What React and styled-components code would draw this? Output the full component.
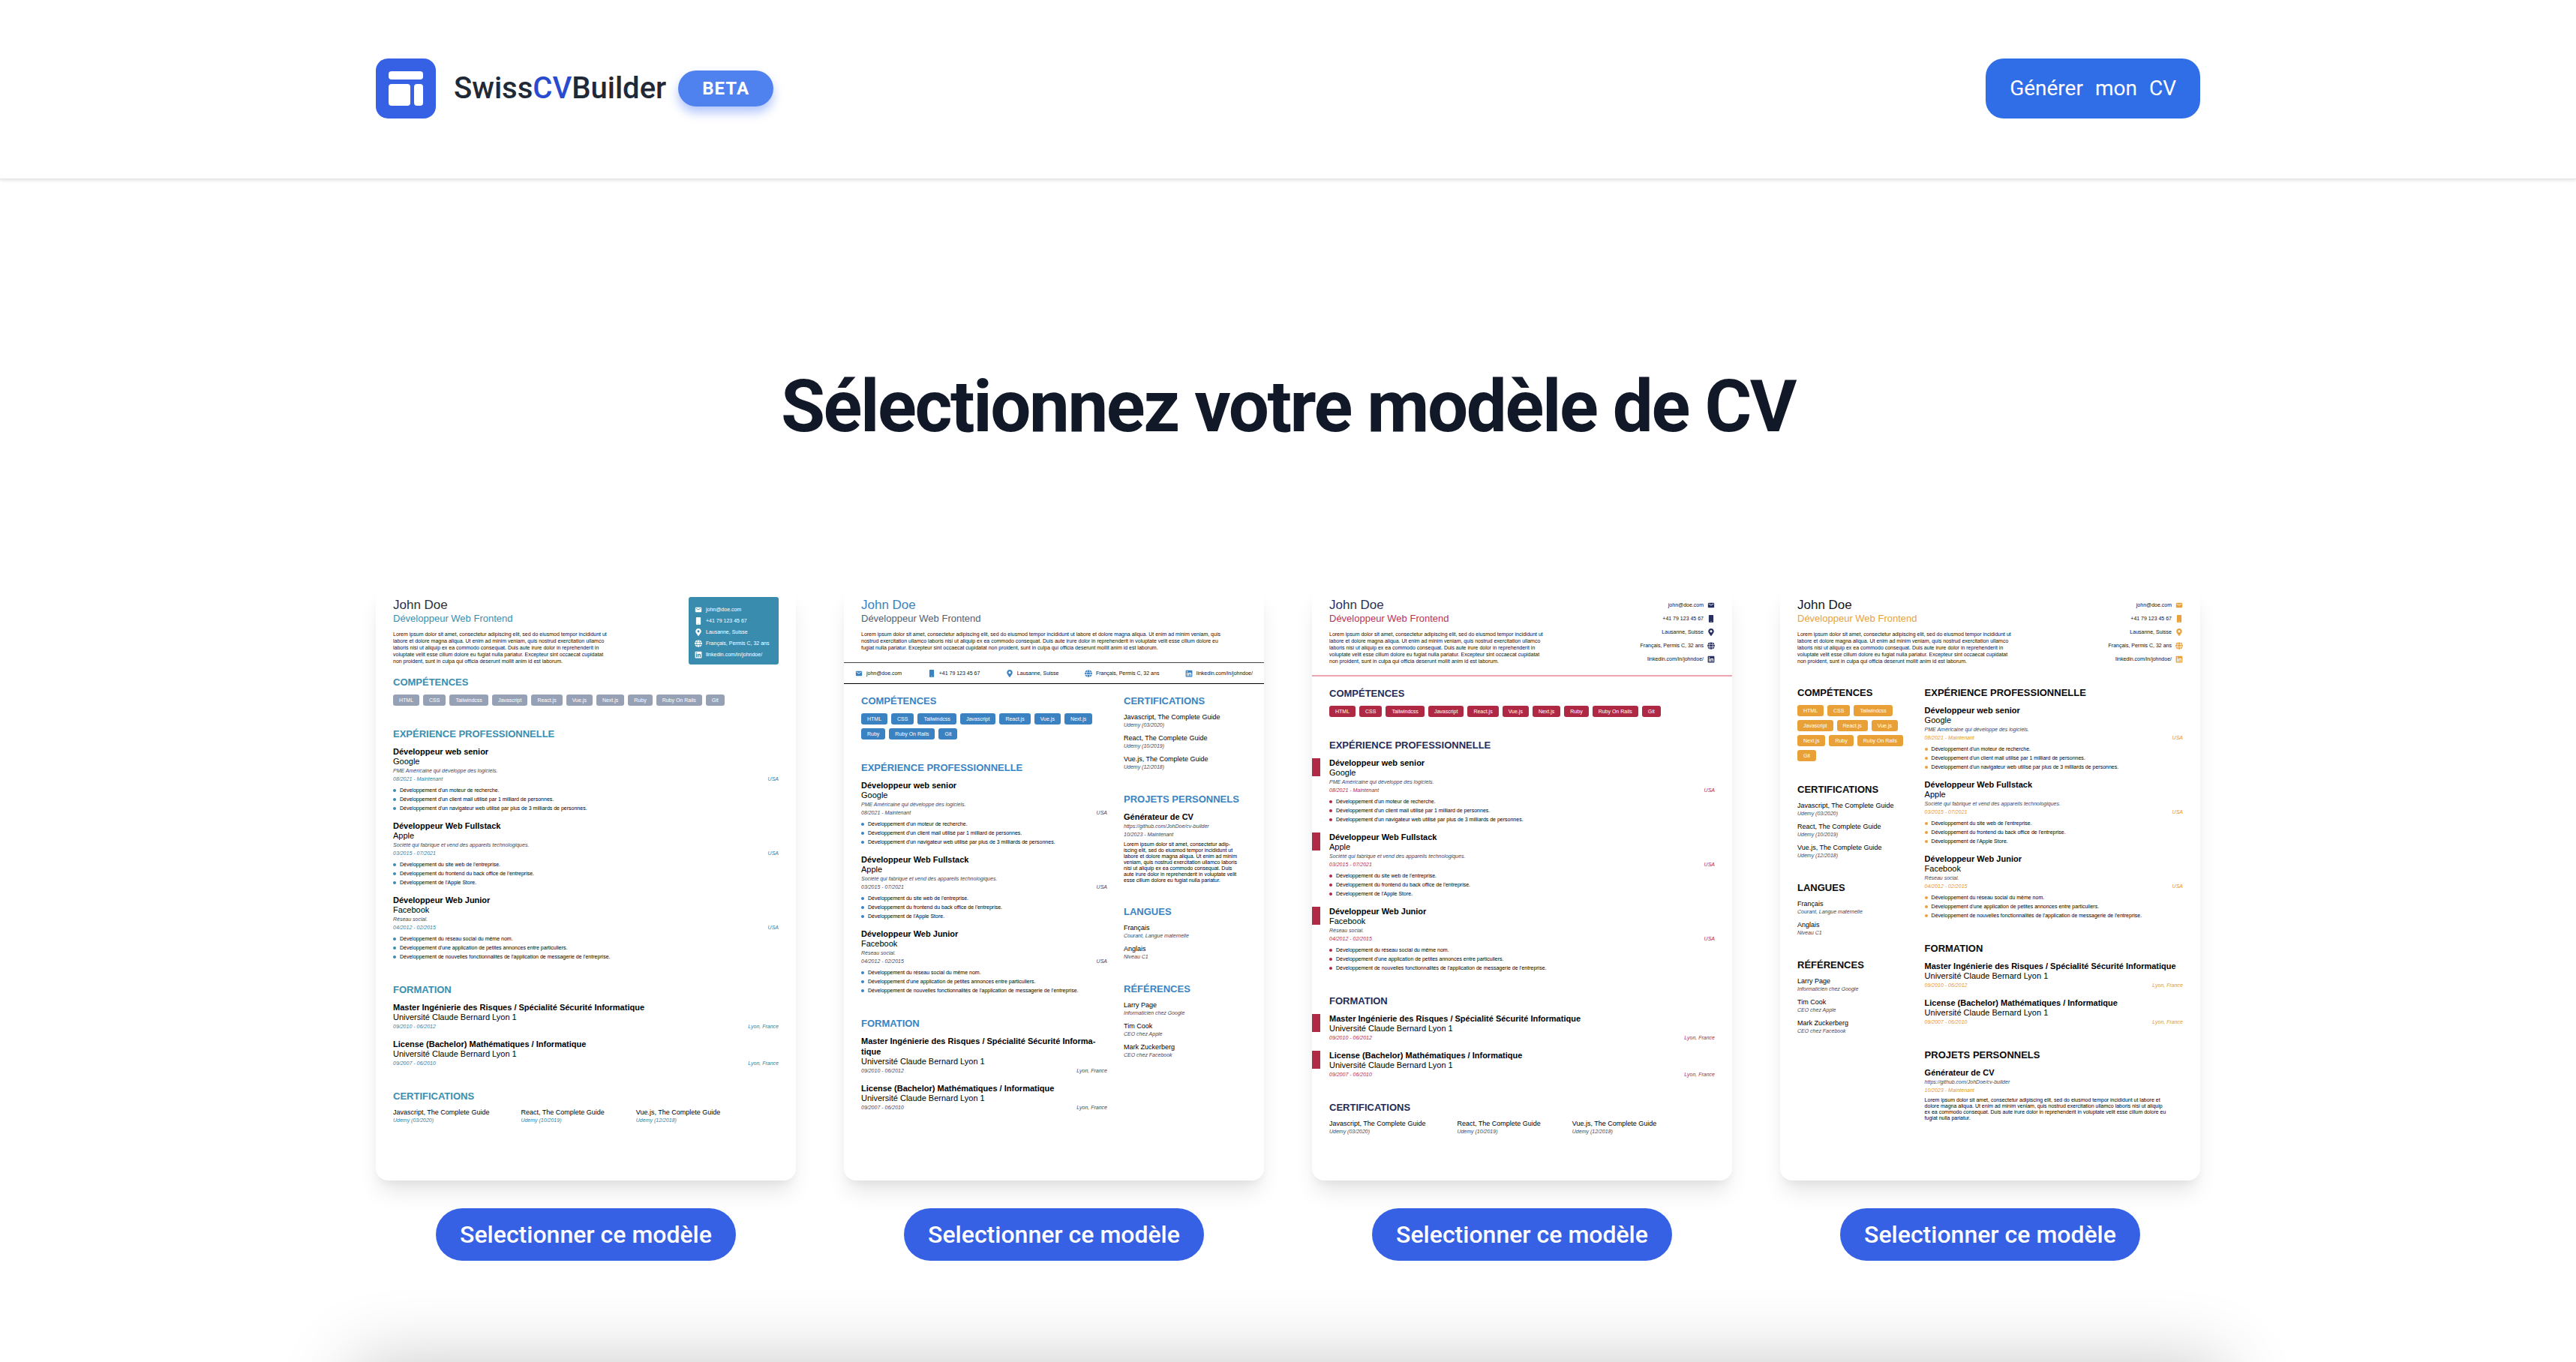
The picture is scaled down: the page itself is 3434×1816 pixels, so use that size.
import React from "react";
import styled, { createGlobalStyle, ThemeProvider } from "styled-components";
import { FaMobile, FaMapMarkerAlt, FaGlobe, FaLinkedin } from "react-icons/fa";
import { MdEmail } from "react-icons/md";

const GlobalStyle = createGlobalStyle`
  *, *::before, *::after { box-sizing: border-box; }
  body { margin: 0; background: #fff; font-family: Roboto, "Liberation Sans", sans-serif; }
  h1, h2, h3, h4, p, ul { margin: 0; padding: 0; }
  ul { list-style: none; }
`;

/* ---------- Page ---------- */

const Page = styled.div`
  min-height: 100vh;
  overflow: hidden;
`;

const Header = styled.header`
  border-bottom: 1px solid #e2e4e6;
  box-shadow: 0 2px 4px rgba(0, 0, 0, 0.1);
  padding: 78px 64px 80px;
`;

const HeaderInner = styled.div`
  max-width: 2432px;
  margin: 0 auto;
  display: flex;
  align-items: center;
  justify-content: space-between;
`;

const Brand = styled.a`
  display: flex;
  align-items: center;
  color: #1f2937;
  text-decoration: none;
`;

const Logo = styled.svg`
  width: 80px;
  height: 80px;
`;

const BrandName = styled.span`
  margin: 0 16px 0 24px;
  font-size: 40px;
  font-weight: 500;
  line-height: 56px;
`;

const Accent = styled.span`
  color: #294bd0;
`;

const Beta = styled.span`
  padding: 0 32px;
  border-radius: 24px;
  background: #4f82ee;
  box-shadow: 0 8px 14px rgba(59, 110, 246, 0.4);
  color: #fff;
  font-size: 24px;
  font-weight: 700;
  line-height: 48px;
  letter-spacing: 1px;
`;

const PrimaryButton = styled.button`
  display: flex;
  gap: 16px;
  padding: 0 32px;
  border: 0;
  border-radius: 24px;
  background: #306ee8;
  color: #fff;
  font: 400 28px/80px Roboto, sans-serif;
`;

const Main = styled.main`
  max-width: 2560px;
  margin: 0 auto;
  padding: 255px 64px 0;
`;

const Title = styled.h1`
  color: #111827;
  font-size: 96px;
  font-weight: 700;
  line-height: 96px;
  letter-spacing: -0.025em;
  text-align: center;
`;

const Templates = styled.div`
  display: grid;
  grid-template-columns: repeat(4, minmax(0, 1fr));
  gap: 64px;
  margin-top: 192px;
`;

const Template = styled.article`
  display: flex;
  flex-direction: column;
  align-items: center;
  gap: 37px;
`;

const SelectButton = styled.button`
  padding: 0 32px;
  border: 0;
  border-radius: 35px;
  background: #3761e4;
  color: #fff;
  font: 500 32px/70px Roboto, sans-serif;
`;

const NextPanel = styled.section`
  height: 200px;
  margin: 139px -28px -200px;
  box-shadow: 0 0 100px rgba(0, 0, 0, 0.23);
`;

/* ---------- CV sheet ---------- */

const Sheet = styled.div`
  width: 100%;
  aspect-ratio: 210 / 297;
  overflow: hidden;
  padding-top: 14px;
  border-radius: 16px;
  background: #fff;
  box-shadow: 0 20px 30px -6px rgba(0, 0, 0, 0.1), 0 8px 12px -4px rgba(0, 0, 0, 0.05);
  color: #000;
  font-family: "Liberation Sans", Arial, sans-serif;
  font-size: 7px;
`;

const SheetHead = styled.div`
  display: flex;
  justify-content: space-between;
  padding: 0 23px;
`;

const Name = styled.h2`
  color: ${(p) => p.theme.name};
  font-size: 17px;
  font-weight: 400;
  line-height: 22px;
`;

const Role = styled.p`
  color: ${(p) => p.theme.role};
  font-size: 13px;
  line-height: 14px;
`;

const Summary = styled.p`
  max-width: ${(p) => p.$width}px;
  margin-top: 9px;
  color: #111;
  line-height: 9px;
`;

const ContactList = styled.ul`
  color: ${(p) => p.theme.contactText};
`;

const ContactBox = styled(ContactList)`
  align-self: flex-start;
  width: 120px;
  height: 90px;
  padding: 9px 0 0 8px;
  border-radius: 3px;
  background: ${(p) => p.theme.accent};
`;

const ContactBar = styled(ContactList)`
  display: flex;
  justify-content: space-between;
  margin-top: 15px;
  padding: 0 15px;
  border-top: 1px solid #444;
  border-bottom: 1px solid #000;
`;

const ContactSide = styled(ContactList)`
  padding-top: 2px;
`;

const ContactItem = styled.li`
  display: flex;
  flex-direction: ${(p) => (p.$reverse ? "row-reverse" : "row")};
  align-items: center;
  gap: 5px;
  line-height: ${(p) => p.$line}px;

  svg {
    flex: none;
    width: 10px;
    height: 10px;
    color: ${(p) => p.theme.icon};
  }
`;

const Rule = styled.hr`
  height: 2px;
  margin: 12px 0 0;
  border: 0;
  background: #eba5b3;
`;

const Column = styled.div`
  display: flex;
  flex-direction: column;
  gap: 30px;
  min-width: 0;
`;

const SheetBody = styled.div`
  display: grid;
  grid-template-columns: ${(p) => p.$columns || "minmax(0, 1fr)"};
  gap: 22px;
  padding: ${(p) => p.$top}px 23px 0;
`;

const SectionTitle = styled.h3`
  margin-bottom: 8px;
  color: ${(p) => p.theme.heading};
  font-size: 13px;
  font-weight: 700;
  line-height: 16px;
`;

const Tags = styled.ul`
  display: flex;
  flex-wrap: wrap;
  gap: 5px;
`;

const Tag = styled.li`
  padding: 0 8px;
  border-radius: 3px;
  background: ${(p) => p.theme.tag};
  color: #fff;
  line-height: 15px;
`;

const Entries = styled.div`
  display: flex;
  flex-direction: column;
  gap: 10px;
`;

const EntryHead = styled.div`
  margin-left: -23px;
  padding-left: 23px;
  background: linear-gradient(${(p) => p.theme.marker}, ${(p) => p.theme.marker}) no-repeat 0 1px / 11px 24px;
`;

const EntryTitle = styled.h4`
  font-size: 11px;
  font-weight: 700;
  line-height: 14px;
`;

const Company = styled.p`
  font-size: 11px;
  line-height: 13px;
`;

const Note = styled.p`
  color: #3f4658;
  font-style: italic;
  line-height: 11px;
`;

const Meta = styled.p`
  display: flex;
  justify-content: space-between;
  color: ${(p) => p.theme.meta};
  font-style: italic;
  line-height: 12px;
`;

const Bullets = styled.ul`
  margin-top: 3px;
`;

const Bullet = styled.li`
  display: flex;
  align-items: center;
  gap: 5px;
  line-height: 12px;

  &::before {
    content: "";
    width: 4px;
    height: 4px;
    border-radius: 2px;
    background: ${(p) => p.theme.accent};
  }
`;

const ShortList = styled.ul`
  display: flex;
  flex-direction: ${(p) => (p.$row ? "row" : "column")};
  gap: ${(p) => (p.$row ? 42 : 7)}px;
`;

const ShortName = styled.p`
  font-size: 9px;
  line-height: 11px;
`;

const ShortNote = styled.p`
  color: ${(p) => (p.$tinted ? p.theme.meta : "#3f4658")};
  font-style: italic;
  line-height: 10px;
`;

const ProjectText = styled.p`
  max-width: ${(p) => p.$width}px;
  margin-top: 3px;
  line-height: 8px;
`;

/* ---------- Data ---------- */

const contacts = [
  [MdEmail, "john@doe.com"],
  [FaMobile, "+41 79 123 45 67"],
  [FaMapMarkerAlt, "Lausanne, Suisse"],
  [FaGlobe, "Français, Permis C, 32 ans"],
  [FaLinkedin, "linkedin.com/in/johndoe/"],
];

const skills = ["HTML", "CSS", "Tailwindcss", "Javascript", "React.js", "Vue.js", "Next.js", "Ruby", "Ruby On Rails", "Git"];

const jobs = [
  {
    title: "Développeur web senior",
    company: "Google",
    note: "PME Américaine qui développe des logiciels.",
    dates: "08/2021 - Maintenant",
    place: "USA",
    points: [
      "Développement d'un moteur de recherche.",
      "Développement d'un client mail utilisé par 1 milliard de personnes.",
      "Développement d'un navigateur web utilisé par plus de 3 milliards de personnes.",
    ],
  },
  {
    title: "Développeur Web Fullstack",
    company: "Apple",
    note: "Société qui fabrique et vend des appareils technologiques.",
    dates: "03/2015 - 07/2021",
    place: "USA",
    points: [
      "Développement du site web de l'entreprise.",
      "Développement du frontend du back office de l'entreprise.",
      "Développement de l'Apple Store.",
    ],
  },
  {
    title: "Développeur Web Junior",
    company: "Facebook",
    note: "Réseau social.",
    dates: "04/2012 - 02/2015",
    place: "USA",
    points: [
      "Développement du réseau social du même nom.",
      "Développement d'une application de petites annonces entre particuliers.",
      "Développement de nouvelles fonctionnalités de l'application de messagerie de l'entreprise.",
    ],
  },
];

const studies = [
  {
    title: "Master Ingénierie des Risques / Spécialité Sécurité Informa\u00ADtique",
    company: "Université Claude Bernard Lyon 1",
    dates: "09/2010 - 06/2012",
    place: "Lyon, France",
  },
  {
    title: "License (Bachelor) Mathématiques / Informatique",
    company: "Université Claude Bernard Lyon 1",
    dates: "09/2007 - 06/2010",
    place: "Lyon, France",
  },
];

const certificates = [
  ["Javascript, The Complete Guide", "Udemy (03/2020)"],
  ["React, The Complete Guide", "Udemy (10/2019)"],
  ["Vue.js, The Complete Guide", "Udemy (12/2018)"],
];

const languages = [
  ["Français", "Courant, Langue maternelle"],
  ["Anglais", "Niveau C1"],
];

const references = [
  ["Larry Page", "Informaticien chez Google"],
  ["Tim Cook", "CEO chez Apple"],
  ["Mark Zuckerberg", "CEO chez Facebook"],
];

const projectText =
  "Lorem ipsum dolor sit amet, consectetur adip\u00ADiscing elit, sed do eiusmod tempor incididunt ut labore et dolore magna aliqua. Ut enim ad minim veniam, quis nostrud exercitation ullamco laboris nisi ut aliquip ex ea commodo consequat. Duis aute irure dolor in reprehenderit in voluptate velit esse cillum dolore eu fugiat nulla pariatur.";

const summaryText =
  projectText +
  " Excepteur sint occaecat cupidatat non proident, sunt in culpa qui officia deserunt mollit anim id est laborum.";

const base = { marker: "transparent", contactText: "#111", meta: "#3f4658" };

const teal = {
  ...base,
  name: "#2d3142",
  role: "#3a8eb0",
  accent: "#3a8cae",
  heading: "#3a8eb0",
  tag: "#96a1b6",
  meta: "#2f7f9f",
  icon: "#fff",
  contactText: "#fff",
};

const blue = {
  ...base,
  name: "#3a84c4",
  role: "#555d6e",
  accent: "#3a84c4",
  heading: "#3a84c4",
  tag: "#3a82c2",
  icon: "#3a82c2",
};

const crimson = {
  ...base,
  name: "#2b3160",
  role: "#bb3354",
  accent: "#b02a48",
  heading: "#262c58",
  tag: "#af2944",
  meta: "#b02a48",
  icon: "#262f60",
  marker: "#b02a45",
};

const amber = {
  ...base,
  name: "#14161f",
  role: "#e9a23b",
  accent: "#e9a23b",
  heading: "#0a0a0a",
  tag: "#e9a036",
  meta: "#e6982a",
  icon: "#e9a23b",
};

/* ---------- CV parts ---------- */

const Intro = ({ width }) => (
  <div>
    <Name>John Doe</Name>
    <Role>Développeur Web Frontend</Role>
    <Summary $width={width}>{summaryText}</Summary>
  </div>
);

const Contacts = ({ as: List, line, reverse }) => (
  <List>
    {contacts.map(([Icon, text]) => (
      <ContactItem key={text} $line={line} $reverse={reverse}>
        <Icon aria-hidden="true" />
        {text}
      </ContactItem>
    ))}
  </List>
);

const Section = ({ title, children }) => (
  <section>
    <SectionTitle>{title}</SectionTitle>
    {children}
  </section>
);

const Skills = () => (
  <Section title="COMPÉTENCES">
    <Tags>
      {skills.map((skill) => (
        <Tag key={skill}>{skill}</Tag>
      ))}
    </Tags>
  </Section>
);

const History = ({ title, entries }) => (
  <Section title={title}>
    <Entries>
      {entries.map((entry) => (
        <div key={entry.title}>
          <EntryHead>
            <EntryTitle>{entry.title}</EntryTitle>
            <Company>{entry.company}</Company>
          </EntryHead>
          {entry.note && <Note>{entry.note}</Note>}
          <Meta>
            <span>{entry.dates}</span>
            <span>{entry.place}</span>
          </Meta>
          {entry.points && (
            <Bullets>
              {entry.points.map((point) => (
                <Bullet key={point}>{point}</Bullet>
              ))}
            </Bullets>
          )}
        </div>
      ))}
    </Entries>
  </Section>
);

const Experience = () => <History title="EXPÉRIENCE PROFESSIONNELLE" entries={jobs} />;
const Education = () => <History title="FORMATION" entries={studies} />;

const Shorts = ({ title, items, row, tinted }) => (
  <Section title={title}>
    <ShortList $row={row}>
      {items.map(([name, note]) => (
        <li key={name}>
          <ShortName>{name}</ShortName>
          <ShortNote $tinted={tinted}>{note}</ShortNote>
        </li>
      ))}
    </ShortList>
  </Section>
);

const Projects = ({ width }) => (
  <Section title="PROJETS PERSONNELS">
    <EntryTitle>Générateur de CV</EntryTitle>
    <Note>https://github.com/JohDoe/cv-builder</Note>
    <Meta>10/2023 - Maintenant</Meta>
    <ProjectText $width={width}>{projectText}</ProjectText>
  </Section>
);

/* ---------- CV templates ---------- */

const TealSheet = () => (
  <Sheet>
    <SheetHead>
      <Intro width={290} />
      <Contacts as={ContactBox} line={15} />
    </SheetHead>
    <SheetBody $top={16}>
      <Column>
        <Skills />
        <Experience />
        <Education />
        <Shorts title="CERTIFICATIONS" items={certificates} row tinted />
      </Column>
    </SheetBody>
  </Sheet>
);

const BlueSheet = () => (
  <Sheet>
    <SheetHead>
      <Intro width={490} />
    </SheetHead>
    <Contacts as={ContactBar} line={27} />
    <SheetBody $columns="minmax(0, 2fr) minmax(0, 1fr)" $top={15}>
      <Column>
        <Skills />
        <Experience />
        <Education />
      </Column>
      <Column>
        <Shorts title="CERTIFICATIONS" items={certificates} />
        <Projects width={152} />
        <Shorts title="LANGUES" items={languages} />
        <Shorts title="RÉFÉRENCES" items={references} />
      </Column>
    </SheetBody>
  </Sheet>
);

const CrimsonSheet = () => (
  <Sheet>
    <SheetHead>
      <Intro width={290} />
      <Contacts as={ContactSide} line={18} reverse />
    </SheetHead>
    <Rule />
    <SheetBody $top={15}>
      <Column>
        <Skills />
        <Experience />
        <Education />
        <Shorts title="CERTIFICATIONS" items={certificates} row />
      </Column>
    </SheetBody>
  </Sheet>
);

const AmberSheet = () => (
  <Sheet>
    <SheetHead>
      <Intro width={290} />
      <Contacts as={ContactSide} line={18} reverse />
    </SheetHead>
    <SheetBody $columns="minmax(0, 3fr) minmax(0, 7fr)" $top={28}>
      <Column>
        <Skills />
        <Shorts title="CERTIFICATIONS" items={certificates} />
        <Shorts title="LANGUES" items={languages} />
        <Shorts title="RÉFÉRENCES" items={references} />
      </Column>
      <Column>
        <Experience />
        <Education />
        <Projects width={324} />
      </Column>
    </SheetBody>
  </Sheet>
);

const templates = [
  [teal, TealSheet],
  [blue, BlueSheet],
  [crimson, CrimsonSheet],
  [amber, AmberSheet],
];

export default function App() {
  return (
    <Page lang="fr">
      <GlobalStyle />
      <Header>
        <HeaderInner>
          <Brand href="#">
            <Logo viewBox="0 0 80 80" aria-hidden="true">
              <rect width="80" height="80" rx="16" fill="#3761e4" />
              <rect x="17" y="17" width="46" height="11" rx="4" fill="#fff" />
              <rect x="17" y="34" width="29" height="29" rx="4" fill="#fff" />
              <rect x="51" y="34" width="12" height="29" rx="4" fill="#fff" />
            </Logo>
            <BrandName>
              Swiss<Accent>CV</Accent>Builder
            </BrandName>
            <Beta>BETA</Beta>
          </Brand>
          <PrimaryButton type="button">
            <span>Générer</span> <span>mon</span> <span>CV</span>
          </PrimaryButton>
        </HeaderInner>
      </Header>
      <Main>
        <Title>Sélectionnez votre modèle de CV</Title>
        <Templates>
          {templates.map(([theme, View]) => (
            <ThemeProvider key={theme.accent} theme={theme}>
              <Template>
                <View />
                <SelectButton type="button">Selectionner ce modèle</SelectButton>
              </Template>
            </ThemeProvider>
          ))}
        </Templates>
        <NextPanel />
      </Main>
    </Page>
  );
}
